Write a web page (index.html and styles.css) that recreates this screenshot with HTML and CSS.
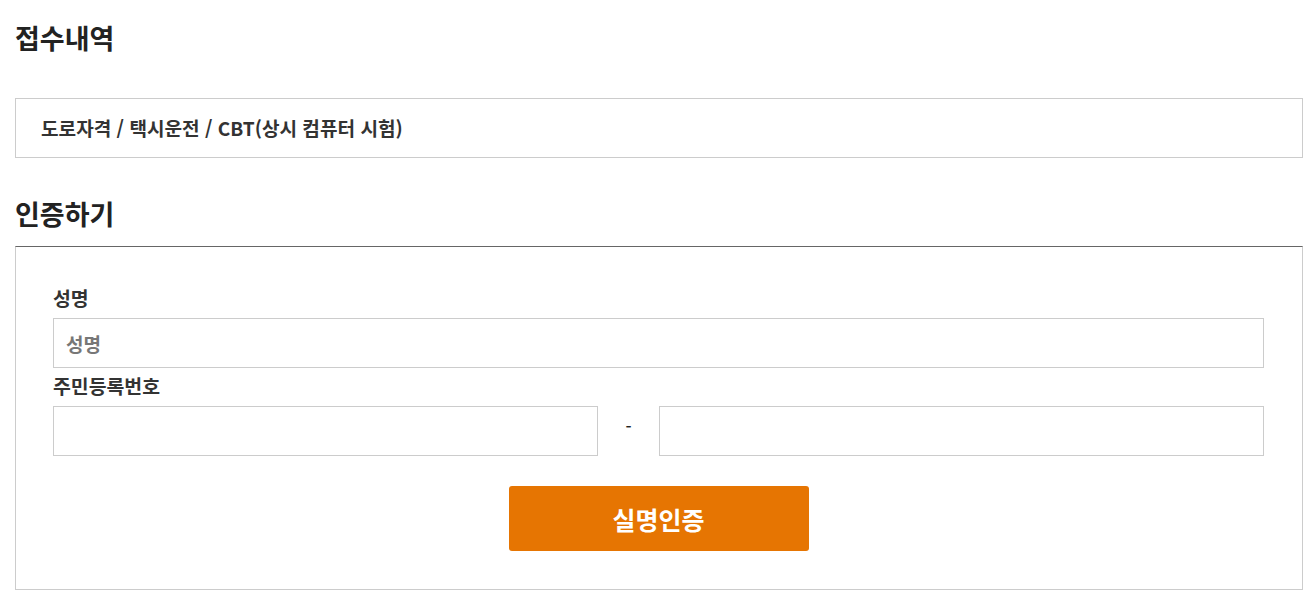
FILE: index.html
```html
<!DOCTYPE html>
<html lang="ko">
<head>
<meta charset="utf-8">
<title>접수내역</title>
<link rel="stylesheet" href="styles.css">
</head>
<body>
<div class="page">
  <h2 class="title">접수내역</h2>
  <div class="receipt">도로자격 / 택시운전 / CBT(상시 컴퓨터 시험)</div>
  <h2 class="title title-auth">인증하기</h2>
  <div class="auth-box">
    <label class="field-label" for="name">성명</label>
    <input class="text-input" id="name" type="text" placeholder="성명">
    <label class="field-label" for="rrn1">주민등록번호</label>
    <div class="rrn-row">
      <input class="text-input" id="rrn1" type="text">
      <span class="dash">-</span>
      <input class="text-input" id="rrn2" type="password">
    </div>
    <div class="btn-row">
      <button class="btn-verify" type="button">실명인증</button>
    </div>
  </div>
</div>
</body>
</html>
```
FILE: styles.css
```css
* { box-sizing: border-box; }
html, body { margin: 0; padding: 0; background: #fff; }
body {
  font-family: "Noto Sans CJK KR", "Noto Sans", "Liberation Sans", sans-serif;
  color: #333;
}
.page {
  width: 1288px;
  margin-left: 15px;
  padding-top: 22px;
}
.title {
  margin: 0;
  font-size: 27px;
  line-height: 32px;
  font-weight: 700;
  color: #222;
}
.receipt {
  margin-top: 44px;
  height: 60px;
  border: 1px solid #ccc;
  padding: 0 25px;
  display: flex;
  align-items: center;
  font-size: 19.1px;
  font-weight: 700;
  color: #333;
}
.title-auth { margin-top: 40px; }
.auth-box {
  margin-top: 16px;
  border: 1px solid #ccc;
  border-top: 1px solid #666;
  padding: 39px 38px 38px 37px;
}
.field-label {
  display: block;
  font-size: 19.4px;
  line-height: 24px;
  font-weight: 700;
  color: #333;
  margin-bottom: 8px;
}
.text-input {
  display: block;
  width: 100%;
  height: 50px;
  border: 1px solid #ccc;
  padding: 0 12px;
  font-family: inherit;
  font-size: 19px;
  font-weight: 700;
  color: #333;
  margin: 0 0 6px 0;
  outline: none;
}
.text-input::placeholder { color: #777; }
.rrn-row {
  display: flex;
  align-items: center;
}
.rrn-row .text-input {
  width: 545px;
  margin: 0;
}
.rrn-row #rrn2 { width: 605px; }
.dash {
  width: 61px;
  text-align: center;
  font-size: 17px;
  line-height: 24px;
  color: #222;
  font-weight: 500;
  margin-bottom: 10px;
}
.btn-row {
  display: flex;
  justify-content: center;
  margin-top: 30px;
}
.btn-verify {
  width: 300px;
  height: 65px;
  border: 0;
  border-radius: 3px;
  background: #e67502;
  color: #fff;
  font-family: inherit;
  font-size: 25px;
  font-weight: 700;
  cursor: pointer;
}
```
